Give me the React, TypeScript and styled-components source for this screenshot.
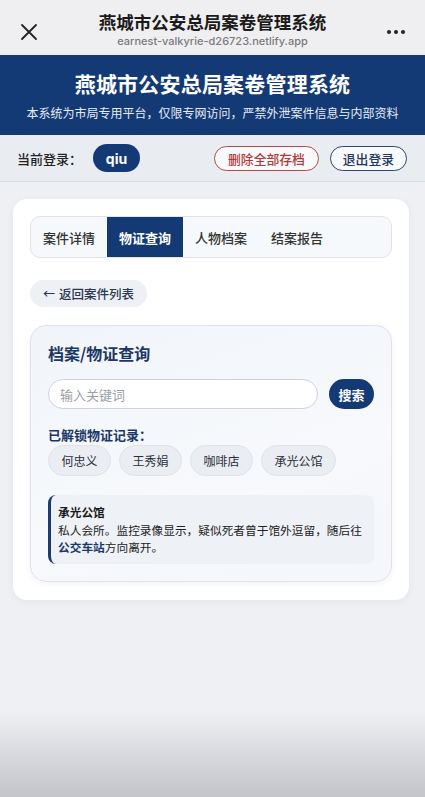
import styled, { createGlobalStyle } from "styled-components";

const GlobalStyle = createGlobalStyle`
    html, body {
        margin: 0;
        padding: 0;
    }
    body {
        font-family: "Noto Sans CJK SC", "Noto Sans", sans-serif;
        background: #eff0f4;
    }
    * {
        box-sizing: border-box;
    }
`

const NAVY = "#143a76";

const Page = styled.div`
    width: 425px;
    min-height: 797px;
    display: flex;
    flex-direction: column;
    background: linear-gradient(180deg, #eff0f4 0, #eff0f4 712px, #dadbe0 752px, #c3c4c9 797px);
`

const BrowserBar = styled.div`
    height: 55px;
    background: #efeff1;
    display: grid;
    grid-template-columns: 58px 1fr 58px;
    align-items: center;
`

const BarIcon = styled.div`
    display: flex;
    justify-content: center;
    align-items: center;
    padding-top: 8px;
`

const BarTitle = styled.div`
    display: flex;
    flex-direction: column;
    align-items: center;
    padding-top: 4px;

    span:first-child {
        font-size: 17.5px;
        font-weight: 700;
        color: #1b1b1b;
        line-height: 22px;
    }

    span:last-child {
        font-family: "Inter", "Noto Sans", sans-serif;
        font-size: 11px;
        font-weight: 500;
        color: #7a7a7c;
        line-height: 14px;
        margin-top: 1px;
    }
`

const Header = styled.div`
    height: 80px;
    background: ${NAVY};
    color: #fff;
    display: flex;
    flex-direction: column;
    align-items: center;
    justify-content: center;
    gap: 9px;

    h1 {
        margin: 0;
        font-size: 21px;
        font-weight: 700;
        line-height: 26px;
        letter-spacing: 0.2px;
    }

    p {
        margin: 0;
        font-size: 12px;
        line-height: 16px;
        color: #e6ecf5;
    }
`

const UserBar = styled.div`
    height: 47px;
    background: #e9ecf1;
    border-bottom: 1px solid #d9dde4;
    display: flex;
    align-items: center;
    padding: 0 18px 0 17px;
`

const UserLabel = styled.span`
    font-size: 13px;
    color: #222;
    font-weight: 500;
`

const UserPill = styled.span`
    margin-left: 11px;
    height: 28px;
    width: 47px;
    border-radius: 14px;
    background: ${NAVY};
    color: #fff;
    font-family: "Inter", "Noto Sans", sans-serif;
    font-weight: 700;
    font-size: 14px;
    display: flex;
    align-items: center;
    justify-content: center;
`

const OutlineButton = styled.button<{ $danger?: boolean }>`
    height: 25px;
    padding: 0 ${p => p.$danger ? 13 : 12}px;
    border-radius: 13px;
    border: 1.2px solid ${p => p.$danger ? "#b84848" : "#2c4674"};
    color: ${p => p.$danger ? "#b23838" : "#1d3563"};
    background: #f8f9fb;
    font-family: inherit;
    font-size: 12.8px;
    font-weight: 500;
    display: flex;
    align-items: center;
    margin-left: ${p => p.$danger ? "auto" : "11px"};
`

const Content = styled.div`
    padding: 17px 16px 0 13px;
`

const Card = styled.div`
    background: #fff;
    border-radius: 14px;
    padding: 17px 17px 18px;
    box-shadow: 0 2px 8px rgba(30, 40, 60, 0.05);
    display: flex;
    flex-direction: column;
    align-items: flex-start;
`

const Tabs = styled.div`
    width: 100%;
    height: 42px;
    border: 1px solid #dfe4ea;
    border-radius: 10px;
    background: #f6f9fb;
    display: flex;
    overflow: hidden;
`

const Tab = styled.div<{ $active?: boolean }>`
    width: 76px;
    display: flex;
    align-items: center;
    justify-content: center;
    font-size: 13px;
    font-weight: ${p => p.$active ? 700 : 500};
    color: ${p => p.$active ? "#fff" : "#333"};
    background: ${p => p.$active ? NAVY : "transparent"};
`

const BackButton = styled.button`
    margin-top: 22px;
    height: 27px;
    padding: 0 13px 0 13px;
    border: none;
    border-radius: 14px;
    background: #edf1f6;
    color: #2a3650;
    font-family: inherit;
    font-size: 12.5px;
    font-weight: 500;
    display: flex;
    align-items: center;
    gap: 4px;

    span {
        font-size: 12px;
    }
`

const Panel = styled.div`
    width: 100%;
    margin-top: 18px;
    border: 1px solid #dde3ec;
    border-radius: 16px;
    background: linear-gradient(160deg, #f1f5fa 0%, #f7f9fc 60%, #f4f7fb 100%);
    box-shadow: 0 2px 6px rgba(30, 40, 60, 0.05);
    padding: 16px 17px 17px;
`

const PanelTitle = styled.h2`
    margin: 0;
    font-size: 16px;
    font-weight: 700;
    color: #1b3768;
    line-height: 22px;
`

const SearchRow = styled.div`
    margin-top: 15px;
    display: flex;
    gap: 11px;
    align-items: center;
`

const SearchInput = styled.div`
    width: 271px;
    height: 30px;
    border: 1px solid #cdd3dc;
    border-radius: 15px;
    background: #fff;
    display: flex;
    align-items: center;
    padding-left: 11px;
    font-size: 13px;
    color: #9a9ea6;
`

const SearchButton = styled.button`
    width: 45px;
    height: 30px;
    border: none;
    border-radius: 15px;
    background: ${NAVY};
    color: #fff;
    font-family: inherit;
    font-size: 13px;
    font-weight: 700;
    padding: 0;
`

const SectionLabel = styled.div`
    margin-top: 17px;
    font-size: 13px;
    font-weight: 700;
    color: #1b3768;
    line-height: 18px;
`

const ChipRow = styled.div`
    margin-top: 1px;
    display: flex;
    gap: 8px;
`

const Chip = styled.span`
    height: 31px;
    padding: 0 12.5px;
    border-radius: 16px;
    border: 1px solid #dfe3ea;
    background: #eaedf2;
    color: #2b2f38;
    font-size: 12px;
    display: flex;
    align-items: center;
`

const InfoBox = styled.div`
    margin-top: 19px;
    border-left: 3px solid #1e3a6e;
    border-radius: 8px;
    background: #eef1f6;
    padding: 8px 3px 8px 7px;
    font-size: 11.7px;
    line-height: 17.5px;
    color: #222;

    strong {
        display: block;
        font-weight: 700;
        color: #1a1a1a;
    }

    b {
        color: #1b3768;
        font-weight: 700;
    }
`

const tabs = ["案件详情", "物证查询", "人物档案", "结案报告"];
const chips = ["何忠义", "王秀娟", "咖啡店", "承光公馆"];

export default function App() {
    return (
        <Page>
            <GlobalStyle />
            <BrowserBar>
                <BarIcon>
                    <svg width="18" height="18" viewBox="0 0 18 18">
                        <path d="M2 2 L16 16 M16 2 L2 16" stroke="#222" strokeWidth="1.8" strokeLinecap="round" />
                    </svg>
                </BarIcon>
                <BarTitle>
                    <span>燕城市公安总局案卷管理系统</span>
                    <span>earnest-valkyrie-d26723.netlify.app</span>
                </BarTitle>
                <BarIcon>
                    <svg width="20" height="6" viewBox="0 0 20 6">
                        <circle cx="3" cy="3" r="2" fill="#222" />
                        <circle cx="10" cy="3" r="2" fill="#222" />
                        <circle cx="17" cy="3" r="2" fill="#222" />
                    </svg>
                </BarIcon>
            </BrowserBar>
            <Header>
                <h1>燕城市公安总局案卷管理系统</h1>
                <p>本系统为市局专用平台，仅限专网访问，严禁外泄案件信息与内部资料</p>
            </Header>
            <UserBar>
                <UserLabel>当前登录：</UserLabel>
                <UserPill>qiu</UserPill>
                <OutlineButton $danger>删除全部存档</OutlineButton>
                <OutlineButton>退出登录</OutlineButton>
            </UserBar>
            <Content>
                <Card>
                    <Tabs>
                        {tabs.map(t => <Tab key={t} $active={t === "物证查询"}>{t}</Tab>)}
                    </Tabs>
                    <BackButton><span>←</span>返回案件列表</BackButton>
                    <Panel>
                        <PanelTitle>档案/物证查询</PanelTitle>
                        <SearchRow>
                            <SearchInput>输入关键词</SearchInput>
                            <SearchButton>搜索</SearchButton>
                        </SearchRow>
                        <SectionLabel>已解锁物证记录：</SectionLabel>
                        <ChipRow>
                            {chips.map(c => <Chip key={c}>{c}</Chip>)}
                        </ChipRow>
                        <InfoBox>
                            <strong>承光公馆</strong>
                            私人会所。监控录像显示，疑似死者曾于馆外逗留，随后往<b>公交车站</b>方向离开。
                        </InfoBox>
                    </Panel>
                </Card>
            </Content>
        </Page>
    )
}
